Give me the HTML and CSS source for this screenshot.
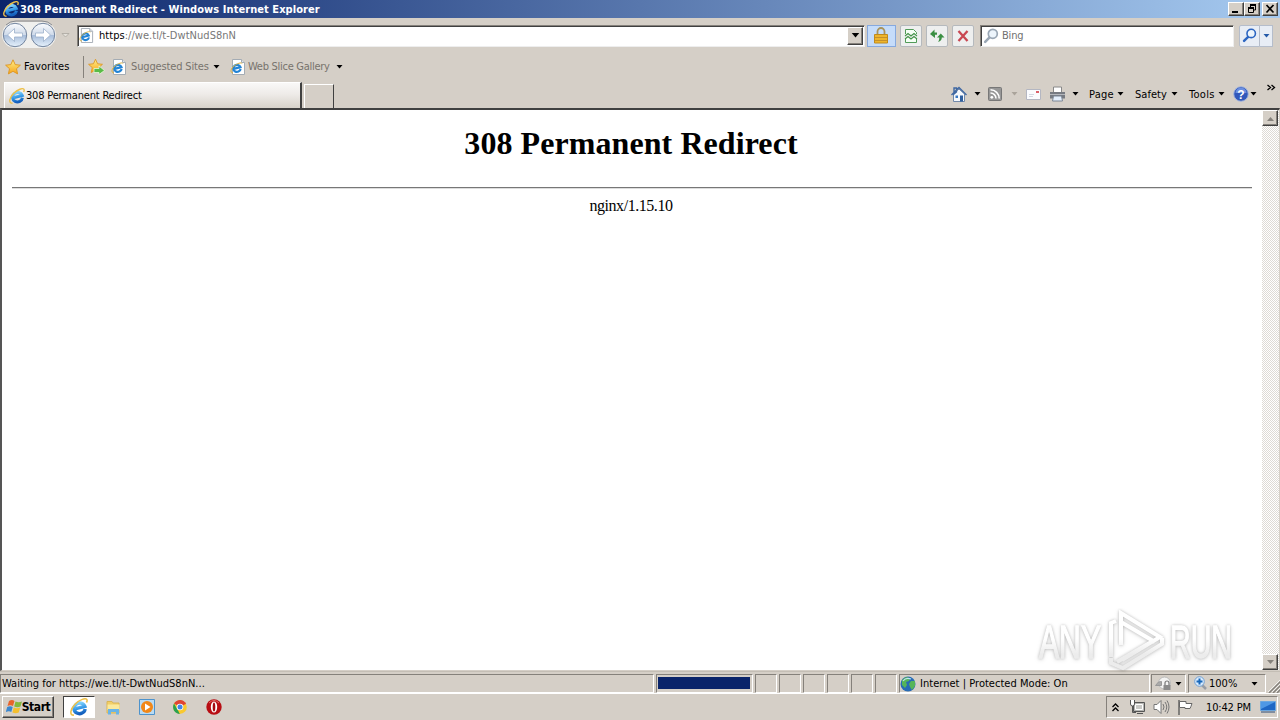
FILE: index.html
```html
<!DOCTYPE html>
<html lang="en">
<head>
<meta charset="utf-8">
<title>308 Permanent Redirect</title>
<link rel="stylesheet" href="styles.css">
</head>
<body>
<svg class="defs" width="0" height="0">
  <defs>
    <linearGradient id="blue" x1="0" y1="0" x2="0" y2="1"><stop offset="0" stop-color="#7fd0fb"/><stop offset=".55" stop-color="#2f93e4"/><stop offset="1" stop-color="#1560bd"/></linearGradient>
    <linearGradient id="orb" x1="0" y1="0" x2="0" y2="1"><stop offset="0" stop-color="#fbfcfe"/><stop offset=".48" stop-color="#d0dbea"/><stop offset=".52" stop-color="#a9bedb"/><stop offset="1" stop-color="#e6f2fc"/></linearGradient>
    <linearGradient id="gold" x1="0" y1="0" x2="0" y2="1"><stop offset="0" stop-color="#fff08a"/><stop offset="1" stop-color="#f6a41a"/></linearGradient>
    <linearGradient id="fade" gradientUnits="userSpaceOnUse" x1="0" y1="10" x2="0" y2="62"><stop offset=".4" stop-color="#fff"/><stop offset=".7" stop-color="#ececec"/></linearGradient>
    <symbol id="ie" viewBox="0 0 16 16">
      <g transform="rotate(-14 8 8.500)"><path d="M13 11A5 4.700 0 1 1 13.300 8.700H5" fill="none" stroke="url(#blue)" stroke-width="3"/></g>
      <path d="M3.500 15.200C-1 15.500.6 9.500 4.500 5.500S14.200-.6 15.100 1.600q.3 1-.5 2.400" fill="none" stroke="#edc04a" stroke-width="1.400"/>
    </symbol>
    <symbol id="iepage" viewBox="0 0 16 16">
      <path d="M2.500.5h9l3 3v12h-12z" fill="#fff" stroke="#a4acb4"/>
      <path d="M11.500.5v3h3" fill="#dde4ea" stroke="#a4acb4"/>
      <g transform="rotate(-14 7 9)"><path d="M10.300 10.800A3.700 3.500 0 1 1 10.600 9H4.500" fill="none" stroke="#2384d5" stroke-width="2.200"/></g>
      <path d="M3 14C-.5 13.500 1 9.500 4 7s7.500-4 8-2.500" fill="none" stroke="#ddb13d"/>
    </symbol>
    <symbol id="star" viewBox="0 0 16 16"><path d="M8 .8l2.200 4.800 5.200.6-3.900 3.500 1.100 5.200L8 12.300l-4.600 2.600 1.100-5.200L.6 6.200l5.200-.6z" fill="url(#gold)" stroke="#dc9420" stroke-width=".9"/></symbol>
    <symbol id="down" viewBox="0 0 7 4"><path d="M.5 0h6L3.500 3.500z" fill="currentColor"/></symbol>
    <symbol id="lens" viewBox="0 0 16 16"><path d="M6.800 9.200L2.200 13.800" stroke="currentColor" stroke-width="2.600" stroke-linecap="round"/><circle cx="9.800" cy="5.800" r="4.500" fill="#edf5fc" stroke="currentColor" stroke-width="1.700"/></symbol>
  </defs>
</svg>

<header class="titlebar">
  <svg class="i16"><use href="#ie"/></svg>
  <h1 class="title">308 Permanent Redirect - Windows Internet Explorer</h1>
  <div class="winbtns">
    <button class="winbtn"><svg width="12" height="10"><path d="M2 8h6" stroke="#000" stroke-width="2"/></svg></button>
    <button class="winbtn"><svg width="12" height="10"><path d="M4 0h6v2H4zM2 3h6v2H2z"/><path d="M4.500 3V1h5v5H8M2.500 4v4.500h5V4" fill="none" stroke="#000"/></svg></button>
    <button class="winbtn closebtn"><svg width="12" height="10"><path d="M2.500 1l7 7.500M9.500 1l-7 7.500" stroke="#000" stroke-width="1.700"/></svg></button>
  </div>
</header>

<nav class="navrow">
  <svg class="orbs" width="70" height="32" viewBox="0 0 70 32">
    <rect x="2" y="3" width="54" height="26" rx="13" fill="#f0f0ee"/>
    <path d="M6 6q4-4 10-4h26q6 0 10 4" fill="none" stroke="#888b91"/>
    <circle cx="15" cy="16" r="11.700" fill="url(#orb)" stroke="#72849e"/>
    <circle cx="43" cy="16" r="11.700" fill="url(#orb)" stroke="#72849e"/>
    <path d="M7.500 16l7-6.500v4.500h8v4h-8v4.500z" fill="#fff" stroke="#9cb0ca" stroke-width=".8"/>
    <path d="M50.500 16l-7-6.500v4.500h-8v4h8v4.500z" fill="#fff" stroke="#9cb0ca" stroke-width=".8"/>
    <path d="M62 14.500h7l-3.500 3.500z" fill="#e4e1db" stroke="#a9a69e" stroke-width=".8"/>
  </svg>
  <div class="address">
    <svg class="i15"><use href="#iepage"/></svg>
    <span class="url"><b>https</b>://we.tl/t-DwtNudS8nN</span>
    <button class="combo"><svg class="tri wide"><use href="#down"/></svg></button>
  </div>
  <button class="lockbtn"><svg width="14" height="17" viewBox="0 0 14 17"><path d="M3.500 8V4.500a3.500 3.500 0 0 1 7 0V8" fill="none" stroke="#a8935c" stroke-width="1.800"/><path d="M.5 7.500h13v8.500H.5z" fill="#eeb52c" stroke="#c08a1c"/><path d="M1 10.500h12M1 13.500h12" stroke="#c4902a"/></svg></button>
  <button class="tool"><svg width="14" height="16" viewBox="0 0 14 16"><path d="M1.500 6V1.500h8l3 3V6M1.500 10v4.500h11V10" fill="#f5fff5" stroke="#519b58"/><path d="M1 8l3-2.500L7 8l3-2.500L13 8M1 11l3-2.500L7 11l3-2.500 3 2.500" fill="none" stroke="#439448" stroke-width="1.100"/></svg></button>
  <button class="tool"><svg width="16" height="16" viewBox="0 0 16 16"><path d="M1 6l4.500-4.500V4.500H8v2.200H6v3.300zM15.500 9.500h-2.700c0 2-1 4-3.800 4.500 1-1.500 1.300-2.500 1.300-4.500H8l3.800-4z" fill="#3b8f43"/></svg></button>
  <button class="tool"><svg width="14" height="14" viewBox="0 0 14 14"><path d="M2.500 2l9 10M11.500 2l-9 10" stroke="#c94752" stroke-width="2.300"/></svg></button>
  <div class="search"><svg class="i16 greylens"><use href="#lens"/></svg><span class="bing">Bing</span></div>
  <button class="go"><svg class="i15 bluelens"><use href="#lens"/></svg></button>
  <button class="godrop"><svg class="tri"><use href="#down"/></svg></button>
</nav>

<nav class="favrow">
  <svg class="i16"><use href="#star"/></svg>
  <span class="fav">Favorites</span>
  <i class="sep"></i>
  <svg class="addfav" width="17" height="17" viewBox="0 0 17 17"><use href="#star" width="15" height="16"/><path d="M6 10.500h5V8l5.500 4.500-5.500 4v-2H6z" fill="#59bb47" stroke="#e9f7d9" stroke-width=".8"/></svg>
  <svg class="i16 sugicon"><use href="#iepage"/></svg>
  <span class="sug">Suggested Sites</span>
  <svg class="tri"><use href="#down"/></svg>
  <svg class="i16 webicon"><use href="#iepage"/></svg>
  <span class="web">Web Slice Gallery</span>
  <svg class="tri"><use href="#down"/></svg>
</nav>

<div class="tabrow">
  <div class="tab"><svg class="i16"><use href="#ie"/></svg><span class="tabname">308 Permanent Redirect</span></div>
  <div class="newtab"></div>
  <div class="commands">
    <svg width="16" height="16" viewBox="0 0 16 16"><path d="M2.500 8v7.500h11V8L8 3z" fill="#f6f9fd" stroke="#7189aa"/><path d="M3 2h2.500v4L3 8zM.5 9L8 1.500 15.500 9" fill="none" stroke="#3f68a3" stroke-width="1.400"/><path d="M9 9.500h3v6H9z" fill="#2f5f9f"/><path d="M4.500 9.500H7V12H4.500z" fill="#3979c3"/></svg>
    <svg class="tri c1"><use href="#down"/></svg>
    <svg class="c2" width="14" height="14" viewBox="0 0 14 14"><rect x=".5" y=".5" width="13" height="13" rx="1" fill="#979797" stroke="#777"/><circle cx="3.800" cy="10.300" r="1.400" fill="#fff"/><path d="M2.500 6a5.500 5.500 0 0 1 5.500 5.500M2.500 2.800a8.700 8.700 0 0 1 8.700 8.700" fill="none" stroke="#fff" stroke-width="1.500"/></svg>
    <svg class="tri c3"><use href="#down"/></svg>
    <svg class="c4" width="15" height="11" viewBox="0 0 15 11"><path d="M.5.5h14v10H.5z" fill="#fbfcff" stroke="#b4b7c2"/><path d="M3 5.500h5M3 7.500h4" stroke="#d3d7e2"/><path d="M10 2h3v2h-3z" fill="#db606a"/></svg>
    <svg class="c5" width="17" height="16" viewBox="0 0 17 16"><path d="M4.500 6V1h8v5" fill="#fff" stroke="#888"/><path d="M1 6h15v6.500H1z" fill="#777b82"/><path d="M1 8.500h15" stroke="#b5b8bd"/><path d="M4.500 10h8l1 5h-10z" fill="#e4effc" stroke="#7c8795"/></svg>
    <svg class="tri c6"><use href="#down"/></svg>
    <span class="page">Page</span><svg class="tri"><use href="#down"/></svg>
    <span class="safety">Safety</span><svg class="tri"><use href="#down"/></svg>
    <span class="tools">Tools</span><svg class="tri"><use href="#down"/></svg>
    <svg class="help" width="16" height="16" viewBox="0 0 16 16"><circle cx="8" cy="8" r="7.300" fill="#3158bb" stroke="#a6b7dc"/><path d="M2.500 7a5.500 5.500 0 0 1 11 0" fill="#6c8fe0"/><text class="qmark" x="8" y="12.500">?</text></svg>
    <svg class="tri"><use href="#down"/></svg>
    <svg class="more" width="9" height="7"><path d="M.5 1l3 2.500-3 2.500M4.500 1l3 2.500-3 2.500" fill="none" stroke="#000" stroke-width="1.300"/></svg>
  </div>
</div>

<main class="view">
  <article class="doc">
    <h2 class="heading">308 Permanent Redirect</h2>
    <hr class="rule">
    <p class="server">nginx/1.15.10</p>
  </article>
  <div class="scroll">
    <button class="sbtn"><svg width="9" height="5"><path d="M1 5h7L4.500 1z" fill="#85817b"/></svg></button>
    <button class="sbtn"><svg width="9" height="5"><path d="M1 0h7L4.500 4z" fill="#85817b"/></svg></button>
  </div>
  <svg class="watermark" width="216" height="66" viewBox="0 0 216 66">
    <g class="glow">
      <text x="9" y="50" textLength="62" lengthAdjust="spacingAndGlyphs">ANY</text>
      <text x="140" y="50" textLength="62" lengthAdjust="spacingAndGlyphs">RUN</text>
      <path d="M81 49V15l5-2M91 37V5l39 24-38 23M91 14l34 20M81 50v5l12 5 39-24V30M87 54l36-21" fill="none" stroke="url(#fade)" stroke-width="4"/>
    </g>
  </svg>
</main>

<footer class="status">
  <div class="pane message"><span class="waiting">Waiting for https://we.tl/t-DwtNudS8nN...</span></div>
  <div class="pane progress"><i class="bar"></i></div>
  <div class="pane cell"></div><div class="pane cell"></div><div class="pane cell"></div><div class="pane cell"></div><div class="pane cell"></div><div class="pane cell"></div>
  <div class="pane zone"><svg width="16" height="16" viewBox="0 0 16 16"><circle cx="8" cy="8" r="7.500" fill="#276bb5"/><path d="M2 4l4-3 4 1-1 3-3 1 1 3-2 3-3-3zM11 5l4 0v5l-3 4-2-3-1-3z" fill="#55b558"/><path d="M3 5q3-4 8-2" fill="none" stroke="#bfe4f3" stroke-width="1.200"/></svg><span class="internet">Internet | Protected Mode: On</span></div>
  <div class="pane privacy"><svg width="17" height="15" viewBox="0 0 17 15"><circle cx="9.500" cy="7" r="6" fill="#f3f3f2" stroke="#bbb"/><path d="M.5 9.500h6V5.500L3.500 6z" fill="#aaa" stroke="#999"/><path d="M10 9V7a2 2 0 0 1 4 0v2" fill="none" stroke="#777" stroke-width="1.200"/><path d="M8.500 9h7v5h-7z" fill="#8b8b8b"/></svg><svg class="tri"><use href="#down"/></svg></div>
  <div class="pane zoom"><svg width="14" height="15" viewBox="0 0 14 15"><path d="M8 9l4 4" stroke="#989da5" stroke-width="2.500"/><circle cx="5.500" cy="5.500" r="4.800" fill="#d9ebfd" stroke="#72a0d2"/><path d="M5.500 2.500v6M2.500 5.500h6" stroke="#1767b9" stroke-width="2"/></svg><span class="pct">100%</span><svg class="tri"><use href="#down"/></svg></div>
  <svg class="grip" width="13" height="13"><path d="M1 13L13 1M5 13l8-8M9 13l4-4" stroke="#85817b" stroke-width="1.500"/><path d="M0 12L12 0M4 12l8-8M8 12l4-4" stroke="#fff" stroke-width=".7"/></svg>
</footer>

<footer class="taskbar">
  <button class="start"><svg width="17" height="16" viewBox="0 0 17 16"><path d="M3 2q3-2 5.500 0L7 7Q4.500 5.500 1.500 7z" fill="#e8642b"/><path d="M9.500 2.500q3 1.500 6.500 0L14.500 7.500q-3 1.500-6.300 0z" fill="#83b93c"/><path d="M1.200 8q3-1.500 5.500 0L5.300 13Q3 11.500-.2 13z" fill="#3b87cf"/><path d="M7.800 8.500q3 1.500 6.400 0L12.700 13.500q-3 1.500-6.300 0z" fill="#f4bf2e"/></svg><span class="startlbl">Start</span></button>
  <button class="active"><svg width="18" height="18"><use href="#ie"/></svg></button>
  <svg class="t1" width="15" height="15" viewBox="0 0 15 15"><path d="M1 1.500h5l1 1.500h6V13H1z" fill="#f2cf67" stroke="#d9b556"/><path d="M1.500 4.500h12V10h-12z" fill="#fae99d"/><path d="M2 14.500V9h11v5.500h-3V12H5v2.500z" fill="#69b4e7"/></svg>
  <svg class="t2" width="16" height="16" viewBox="0 0 16 16"><path d="M.5.5h15v15H.5z" fill="#b9dbf3" stroke="#4d93cc"/><circle cx="8" cy="8" r="6" fill="#f18718"/><path d="M6 4.500L11.500 8 6 11.500z" fill="#fff"/></svg>
  <svg class="t3" width="14" height="14" viewBox="0 0 14 14"><circle cx="7" cy="7" r="6.800" fill="#f9c92f"/><path d="M7 7L1 3.500a7 7 0 0 1 12.100.2z" fill="#df4435"/><path d="M1 3.500L7 14A7 7 0 0 1 1 3.500z" fill="#2ba150"/><path d="M5 9l2 5 3-5z" fill="#f9c92f"/><circle cx="7" cy="7" r="3.300" fill="#fff"/><circle cx="7" cy="7" r="2.500" fill="#4285e8"/></svg>
  <svg class="t4" width="16" height="16" viewBox="0 0 16 16"><circle cx="8" cy="8" r="7.700" fill="#b80d13"/><path d="M3 4q5-5 10 0" fill="none" stroke="#e26b67"/><ellipse cx="8" cy="8" rx="3.200" ry="5.500" fill="#fff"/><ellipse cx="8" cy="8" rx="1.300" ry="4.500" fill="#a50a10"/></svg>
  <div class="tray">
    <svg width="7" height="9"><path d="M.5 4L3.500 1l3 3M.5 8l3-3 3 3" fill="none" stroke="#000" stroke-width="1.300"/></svg>
    <svg class="net" width="17" height="16" viewBox="0 0 17 16"><path d="M4.500 3.500h11v9h-11z" fill="#b5b5b2" stroke="#555"/><path d="M6.500 5.500h7v5h-7z" fill="#c9c9c6" stroke="#fff"/><path d="M8 14.500h6M3.500 7v6.500H7" fill="none" stroke="#555"/><path d="M1.500 1v4q0 2 2 2t2-2V1" fill="#fff" stroke="#555"/></svg>
    <svg class="vol" width="17" height="16" viewBox="0 0 17 16"><path d="M1 5.500h3l4-4v13l-4-4H1z" fill="#fff" stroke="#777"/><path d="M10 5q2 3 0 6M12 3q3.500 5 0 10M14 1.500q4 6.500 0 13" fill="none" stroke="#777"/></svg>
    <svg class="flag" width="17" height="16" viewBox="0 0 17 16"><path d="M2 1v15" stroke="#555" stroke-width="1.300"/><path d="M2.500 2.500H9v2h6q-1 3-2 5H8v-1H2.500z" fill="#fff" stroke="#666"/></svg>
    <span class="clock">10:42 PM</span>
    <svg class="desk" width="16" height="12"><path d="M.5.500h15v9H.500z" fill="#1f67c4" stroke="#6ca7df"/><path d="M1 1h14L1 8z" fill="#4f98e5"/><path d="M1 11h14" stroke="#2c4c78"/></svg>
  </div>
</footer>
</body>
</html>
```
FILE: styles.css
```css
* { box-sizing: border-box; }
body { margin: 0; width: 1280px; height: 720px; overflow: hidden; display: flex; flex-direction: column; background: #d5cfc7; color: #000; font: 11px/14px "DejaVu Sans Condensed", "DejaVu Sans", sans-serif; }
button { padding: 0; margin: 0; border: 0; background: #d5cfc7; font: inherit; display: flex; align-items: center; justify-content: center; flex: none; }
svg { display: block; flex: none; }
span { white-space: nowrap; flex: none; }
.defs { position: absolute; }
.i16 { width: 16px; height: 16px; }
.i15 { width: 15px; height: 15px; }
.tri { width: 7px; height: 4px; }
.wide { width: 9px; height: 5px; }

.titlebar { height: 18px; flex: none; display: flex; align-items: center; padding-left: 3px; background: linear-gradient(90deg, #0a246a, #a6caf0); }
.title { margin: 1px 0 0 1px; color: #fff; font-size: 11px; line-height: 16px; font-weight: bold; white-space: nowrap; letter-spacing: .065px; }
.winbtns { display: flex; margin: 0 2px 0 auto; }
.winbtn, .combo, .sbtn { border: 1px solid; border-color: #fff #404040 #404040 #fff; box-shadow: inset -1px -1px #85817b; }
.winbtn { width: 16px; height: 14px; }
.closebtn { margin-left: 2px; }

.navrow { height: 35px; flex: none; display: flex; align-items: center; }
.orbs { margin: -1px 7px 0 0; }
.address, .search { height: 22px; display: flex; align-items: center; background: #fff; border: 1px solid; border-color: #85817b #eee #eee #85817b; box-shadow: inset 1px 1px #404040; }
.address { width: 788px; padding: 0 1px 0 1px; }
.url { margin-left: 5px; color: #777; letter-spacing: .04px; }
.url b { font-weight: normal; color: #000; }
.combo { width: 16px; height: 18px; margin-left: auto; }
.lockbtn { width: 29px; height: 22px; margin-left: 2px; padding-right: 2px; background: #c5dcfa; border: 1px solid #86a9de; }
.tool { width: 22px; height: 22px; margin-left: 4px; background: #eeefef; border: 1px solid #b5b9bd; border-radius: 2px; }
.search { width: 254px; margin-left: 6px; padding-left: 2px; }
.greylens { color: #9aa7b5; }
.bing { margin-left: 3px; color: #707070; letter-spacing: -.2px; }
.bluelens { color: #2c65c1; }
.go { width: 21px; height: 22px; margin-left: 5px; background: #e8edf5; border: 1px solid #b5bdcb; border-radius: 2px 0 0 2px; }
.godrop { width: 13px; height: 22px; background: #e8edf5; border: 1px solid #b5bdcb; border-left: 0; color: #2459a8; }

.favrow { height: 27px; flex: none; display: flex; align-items: center; padding-left: 5px; }
.fav { width: 59px; margin-left: 3px; letter-spacing: .1px; }
.sep { width: 1px; height: 22px; background: #85817b; margin-right: 4px; }
.sugicon { margin-left: 6px; }
.sug { width: 82px; margin-left: 4px; color: #77736d; letter-spacing: -.15px; }
.webicon { margin-left: 10px; }
.web { width: 88px; margin-left: 2px; color: #77736d; letter-spacing: -.28px; }

.tabrow { height: 28px; flex: none; display: flex; align-items: flex-end; padding-left: 4px; }
.tab { width: 298px; height: 26px; display: flex; align-items: center; padding-left: 5px; background: linear-gradient(#f9f8f7, #eeebe8 45%, #d7d2ca); border: 1px solid #fff; border-width: 1px 0 0 1px; border-right: 2px solid #404040; }
.tab .i16 { margin-left: -1px; }
.tabname { margin: 1px 0 0 1px; letter-spacing: -.18px; }
.newtab { width: 30px; height: 24px; margin-left: 2px; border: 1px solid #fff; border-bottom: 0; border-right: 1px solid #404040; }
.commands { height: 28px; display: flex; align-items: center; margin-left: 617px; flex: none; }
.commands span { padding-top: 1px; }
.c1 { margin-left: 7px; }
.c2 { margin-left: 7px; }
.c3 { margin-left: 9px; color: #aaa49b; }
.c4 { margin-left: 8px; }
.c5 { margin-left: 8px; }
.c6 { margin-left: 6px; }
.page { width: 28px; margin-left: 10px; letter-spacing: .2px; }
.safety { width: 36px; margin-left: 11px; letter-spacing: .05px; }
.tools { width: 29px; margin-left: 11px; letter-spacing: .3px; }
.help { margin-left: 8px; }
.help + .tri { margin-left: 1px; }
.qmark { font: bold 12px "Liberation Sans", sans-serif; fill: #fff; text-anchor: middle; }
.more { margin: 0 0 13px 10px; }

.view { position: relative; height: 563px; flex: none; display: flex; background: #fff; border-top: 2px solid #404040; border-left: 2px solid #555; border-right: 1px solid #d5cfc7; border-bottom: 1px solid #d5cfc7; }
.doc { width: 1260px; padding: 0 10px; text-align: center; font-family: "Liberation Serif", "Times New Roman", serif; }
.heading { margin: 15px 2px 0 0; font-size: 32px; line-height: 37px; font-weight: bold; letter-spacing: .07px; }
.rule { height: 2px; margin: 25px 0 0; border: 0; border-top: 1px solid #777; border-bottom: 1px solid #ddd; }
.server { margin: 8px 2px 0 0; font-size: 16px; line-height: 18px; letter-spacing: -.45px; }
.scroll { width: 17px; height: 560px; padding-right: 1px; display: flex; flex-direction: column; justify-content: space-between; background: repeating-conic-gradient(#fff 0 25%, #dedad5 0 50%) 0 0 / 2px 2px; }
.sbtn { width: 16px; height: 16px; }
.watermark { position: absolute; left: 1028px; top: 498px; }
.glow { filter: drop-shadow(0 0 1.5px rgba(0, 0, 0, .2)) drop-shadow(0 1px 2px rgba(0, 0, 0, .13)); }
.glow text { font: 47px "Liberation Sans", sans-serif; fill: url(#fade); stroke: url(#fade); stroke-width: 1.3px; }

.status { height: 22px; flex: none; display: flex; align-items: flex-start; padding-top: 2px; border-top: 1px solid #c4beb5; }
.pane { height: 19px; flex: none; display: flex; align-items: center; border: 1px solid; border-color: #85817b #fff #fff #85817b; }
.message { width: 654px; padding-left: 1px; }
.waiting { letter-spacing: .01px; }
.progress { width: 97px; margin-left: 2px; margin-right: 2px; padding-left: 1px; }
.bar { width: 92px; height: 12px; margin-top: -1px; background: #0a246a; }
.cell { width: 22px; margin-right: 2px; }
.zone { width: 251px; padding-left: 0; }
.internet { margin-left: 4px; letter-spacing: .03px; }
.privacy { width: 35px; margin-left: 1px; padding-left: 3px; }
.privacy .tri { margin-left: 3px; }
.zoom { width: 78px; margin-left: 2px; padding-left: 5px; }
.pct { width: 42px; margin-left: 1px; }
.grip { margin: 6px 0 0 2px; }

.taskbar { height: 27px; flex: none; display: flex; align-items: center; padding: 0 2px; border-top: 1px solid #fff; }
.start { width: 52px; height: 22px; border: 1px solid; border-color: #fff #404040 #404040 #fff; box-shadow: inset -1px -1px #85817b; font-weight: bold; }
.startlbl { font-size: 12px; letter-spacing: -.45px; margin-left: -1px; }
.active { width: 32px; height: 22px; margin-left: 9px; background: #fff; border: 1px solid; border-color: #404040 #fff #fff #404040; }
.t1 { margin-left: 11px; }
.t2 { margin-left: 18px; }
.t3 { margin-left: 18px; }
.t4 { margin-left: 19px; }
.tray { width: 172px; height: 22px; margin-left: auto; padding-left: 5px; display: flex; align-items: center; border: 1px solid; border-color: #85817b #fff #fff #85817b; }
.net { margin-left: 10px; }
.vol { margin-left: 7px; }
.flag { margin-left: 7px; }
.clock { width: 50px; margin-left: 12px; padding-top: 1px; letter-spacing: -.15px; }
.desk { margin-left: 4px; }
```
